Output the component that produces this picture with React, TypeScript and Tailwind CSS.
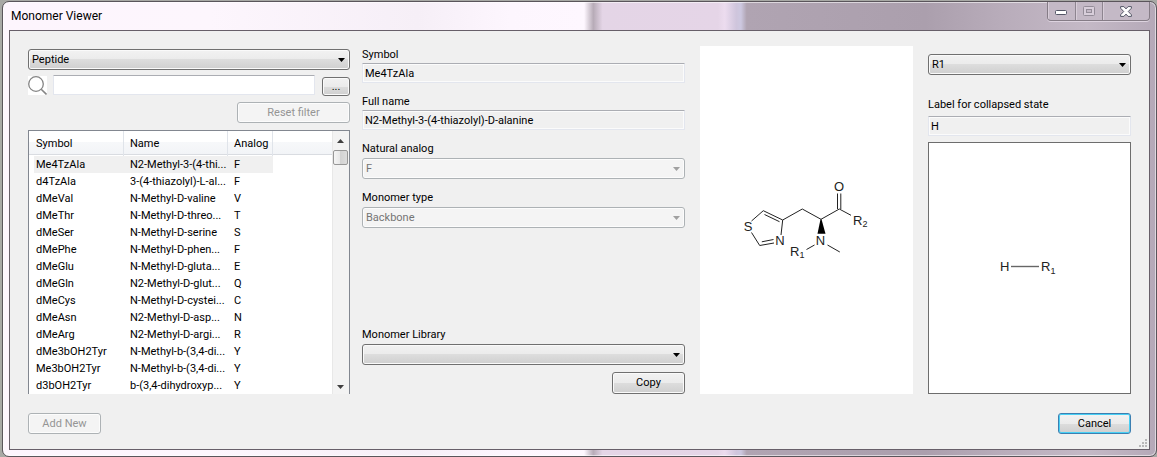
import React from "react";

const rows: [string, string, string][] = [
  ["Me4TzAla", "N2-Methyl-3-(4-thi...", "F"],
  ["d4TzAla", "3-(4-thiazolyl)-L-al...", "F"],
  ["dMeVal", "N-Methyl-D-valine", "V"],
  ["dMeThr", "N-Methyl-D-threo...", "T"],
  ["dMeSer", "N-Methyl-D-serine", "S"],
  ["dMePhe", "N-Methyl-D-phen...", "F"],
  ["dMeGlu", "N-Methyl-D-gluta...", "E"],
  ["dMeGln", "N2-Methyl-D-glut...", "Q"],
  ["dMeCys", "N-Methyl-D-cystei...", "C"],
  ["dMeAsn", "N2-Methyl-D-asp...", "N"],
  ["dMeArg", "N2-Methyl-D-argi...", "R"],
  ["dMe3bOH2Tyr", "N-Methyl-b-(3,4-di...", "Y"],
  ["Me3bOH2Tyr", "N-Methyl-b-(3,4-di...", "Y"],
  ["d3bOH2Tyr", "b-(3,4-dihydroxyp...", "Y"],
];

const raised =
  "bg-[linear-gradient(#f2f2f2,#ebebeb_50%,#dddddd_50%,#cfcfcf)] border-[#707070] text-black shadow-[inset_0_0_0_1px_#fafafa]";
const faded = "bg-[#f4f4f4] border-[#adb2b5] shadow-[inset_0_0_0_1px_#fcfcfc]";

function Button({
  children,
  className = "",
  disabled = false,
}: {
  children: React.ReactNode;
  className?: string;
  disabled?: boolean;
}) {
  return (
    <button
      type="button"
      disabled={disabled}
      className={`flex shrink-0 items-center justify-center rounded-[3px] border ${
        disabled ? `${faded} text-[#959595]` : raised
      } ${className}`}
    >
      {children}
    </button>
  );
}

function Select({
  id,
  value,
  disabled = false,
  label,
}: {
  id: string;
  value: string;
  disabled?: boolean;
  label?: string;
}) {
  return (
    <div className="relative">
      <select
        id={id}
        aria-label={label}
        disabled={disabled}
        defaultValue={value}
        className={`block h-[21px] w-full appearance-none rounded-[3px] border pr-5 pl-[3px] opacity-100 ${
          disabled ? `${faded} text-[#747474]` : raised
        }`}
      >
        <option value={value}>{value}</option>
      </select>
      <svg
        className={`pointer-events-none absolute top-[9px] right-[5px] ${
          disabled ? "fill-[#a0a0a0]" : "fill-black"
        }`}
        width="7"
        height="4"
        viewBox="0 0 7 4"
      >
        <path d="M0 0h7L3.5 4z" />
      </svg>
    </div>
  );
}

function ReadOnly({ id, value }: { id: string; value: string }) {
  return (
    <input
      id={id}
      readOnly
      value={value}
      className="block h-5 w-full rounded-[1px] border border-[#e3e6ee] border-t-[#abadb3] bg-[#f0f0f0] px-0.5 shadow-[inset_0_0_0_1px_#fbfbfb]"
    />
  );
}

function Label({ htmlFor, children }: { htmlFor: string; children: React.ReactNode }) {
  return (
    <label htmlFor={htmlFor} className="block h-4 leading-4">
      {children}
    </label>
  );
}

function WindowButtons() {
  return (
    <div className="flex h-[19px] overflow-hidden rounded-b-[4px] border border-t-0 border-[#857c86] bg-[#c4b9c6] shadow-[0_1px_0_#ddd3df]">
      <button type="button" aria-label="Minimize" className="flex w-7 items-center justify-center border-r border-[#8e8590] shadow-[inset_1px_0_0_#d8ced9]">
        <svg width="13" height="6" viewBox="0 0 13 6" className="mt-1">
          <rect x="0.5" y="0.5" width="11" height="4" rx="1" fill="#fff" stroke="#535666" />
        </svg>
      </button>
      <button type="button" aria-label="Maximize" disabled className="flex w-[27px] items-center justify-center border-r border-[#8e8590] shadow-[inset_1px_0_0_#d8ced9]">
        <svg width="12" height="10" viewBox="0 0 12 10">
          <rect x="0.5" y="0.5" width="11" height="9" rx="1" fill="#d8ceda" stroke="#948c98" />
          <rect x="3.5" y="3.5" width="5" height="3" fill="#c4b9c6" stroke="#948c98" />
        </svg>
      </button>
      <button type="button" aria-label="Close" className="flex w-[46px] items-center justify-center shadow-[inset_1px_0_0_#d8ced9]">
        <svg width="12" height="11" viewBox="0 0 12 11">
          <path
            d="M.6.6h3.3L6 2.9 8.1.6h3.3v1.6L8.3 5.5l3.1 3.3v1.6H8.1L6 8.1l-2.1 2.3H.6V8.8l3.1-3.3L.6 2.2z"
            fill="#fff"
            stroke="#535666"
          />
        </svg>
      </button>
    </div>
  );
}

function MonomerTable() {
  return (
    <div className="flex h-[264px] overflow-hidden border border-b-0 border-[#828790] bg-white">
      <div className="flex-1 overflow-hidden bg-[linear-gradient(#fff_11px,#f7f8fa_11px,#f2f4f7_23px,#d9dce1_23px,#d9dce1_24px,#fff_24px)] pl-[5px]">
        <table className="w-[239px] table-fixed border-separate border-spacing-0 text-left">
          <colgroup>
            <col className="w-[90px]" />
            <col className="w-[104px]" />
            <col className="w-[45px]" />
          </colgroup>
          <thead>
            <tr className="h-[25px]">
              <th className="border-r border-[#e0e4ea] p-0 pl-0.5 font-normal">Symbol</th>
              <th className="border-r border-[#e0e4ea] p-0 pl-1.5 font-normal">Name</th>
              <th className="border-r border-[#e0e4ea] p-0 pl-1.5 font-normal">Analog</th>
            </tr>
          </thead>
          <tbody>
            {rows.map(([symbol, name, analog], i) => (
              <tr key={symbol} className={i === 0 ? "h-[17px] bg-[#f0f0f0]" : "h-[17px]"}>
                <td className="p-0 pl-0.5 whitespace-nowrap">{symbol}</td>
                <td className="p-0 pl-1.5 whitespace-nowrap">{name}</td>
                <td className="p-0 pl-1.5">{analog}</td>
              </tr>
            ))}
          </tbody>
        </table>
      </div>
      <div className="flex w-[17px] flex-col items-center bg-[#f3f3f3] shadow-[inset_1px_0_0_#e8e8e8]">
        <svg width="7" height="4" viewBox="0 0 7 4" className="mt-2 fill-[#404040]">
          <path d="M0 4h7L3.5 0z" />
        </svg>
        <div className="mt-[7px] h-[15px] w-[15px] rounded-[2px] border border-[#979797] bg-[linear-gradient(90deg,#f5f5f5,#e6e6e6_50%,#d2d2d2_50%,#dcdcdc)]" />
        <svg width="7" height="4" viewBox="0 0 7 4" className="mt-auto mb-[5px] fill-[#404040]">
          <path d="M0 0h7L3.5 4z" />
        </svg>
      </div>
    </div>
  );
}

function MonomerStructure() {
  return (
    <svg
      width="213"
      height="348"
      viewBox="0 0 213 348"
      className="font-['Liberation_Sans',Arial,sans-serif] text-[13px]"
      role="img"
      aria-label="Monomer structure"
    >
      <g fill="none" stroke="#222" strokeWidth="1">
        <path d="M51.5 175 63.3 164.7 82.7 174 81 189" />
        <path d="M64.5 168.5 79.5 175.7" />
        <path d="M51.5 186.5 59.7 199.5 74 197" />
        <path d="M61.8 195.8 73.5 193.5" />
        <path d="M82.7 174 102.3 163 121 173.3 139.3 163 151 169.3" />
        <path d="M137.5 163V147.5M140.8 163V147.5" />
        <path d="M127.5 199 139.8 206M114.5 199 106.5 203.5" />
      </g>
      <path d="M120.5 173.3h1l4 14.4h-8z" fill="#000" />
      <g fill="#222" textAnchor="middle">
        <text x="48" y="185">S</text>
        <text x="80" y="199">N</text>
        <text x="120.5" y="199">N</text>
        <text x="139" y="145">O</text>
      </g>
      <g fill="#222">
        <text x="153" y="179">
          R<tspan dy="2" className="text-[9px]">2</tspan>
        </text>
        <text x="90" y="210">
          R<tspan dy="2" className="text-[9px]">1</tspan>
        </text>
      </g>
    </svg>
  );
}

function CapStructure() {
  return (
    <svg
      width="201"
      height="250"
      viewBox="0 0 201 250"
      className="font-['Liberation_Sans',Arial,sans-serif] text-[13px]"
      role="img"
      aria-label="R-group structure"
    >
      <text x="71" y="128" fill="#222">H</text>
      <path d="M82 123.5H110" stroke="#666" strokeWidth="1.4" />
      <text x="112" y="128" fill="#222">
        R<tspan dy="3" className="text-[9px]">1</tspan>
      </text>
    </svg>
  );
}

export default function App() {
  return (
    <div className="flex min-h-screen bg-[#a8a9a5] pt-px pl-0.5 font-[Roboto,'Liberation_Sans',sans-serif] text-[11px] leading-4 text-black">
      <div className="flex flex-1 flex-col rounded-[7px] border border-[#5a555b] bg-[linear-gradient(90deg,#fdf5fd_0%,#fdf6fd_18%,#f6eff7_36%,#fdf6fe_44%,#fef7ff_50.4%,#b7abb7_51.2%,#e4d5e6_52%,#e5d5e7_62%,#ecdcef_62.6%,#cfc5dc_63.6%,#cdc8e0_64%,#b0a4b2_64.5%,#ab9fad_80%,#b9adbb_87%,#c4b9c6_94%,#b5a9b8_100%)] px-1.5 pb-1.5 shadow-[inset_0_0_0_1px_#ffffff90]">
        <header className="flex h-7 items-start justify-between">
          <h1 className="pl-0.5 text-[12px] leading-7">Monomer Viewer</h1>
          <WindowButtons />
        </header>

        <main className="relative flex flex-1 flex-col border border-[#675f69] bg-[#f0f0f0] px-[18px] py-[15px]">
          <div className="grid grid-cols-[657fr_213fr_203fr] gap-[15px]">
            <div className="grid grid-cols-[322fr_323fr] gap-3">
              <section className="flex flex-col pt-[3px]">
                <Select id="polymer" label="Polymer type" value="Peptide" />
                <div className="mt-[5px] flex h-[21px] items-start">
                  <svg width="19" height="19" viewBox="0 0 19 19" className="mt-px shrink-0 bg-white" fill="none" stroke="#858585">
                    <circle cx="8" cy="8" r="7.3" strokeWidth="1.3" />
                    <path d="M13.2 13.2 18.5 18.5" strokeWidth="1.6" />
                  </svg>
                  <input
                    aria-label="Filter"
                    className="ml-1.5 h-5 min-w-0 flex-1 rounded-[1px] border border-[#e3e6ee] border-t-[#abadb3] bg-white px-1"
                  />
                  <Button className="ml-[7px] h-[19px] w-7 self-end">...</Button>
                </div>
                <Button disabled className="mt-1.5 h-[21px] w-[113px] self-end">
                  Reset filter
                </Button>
                <div className="mt-[7px]">
                  <MonomerTable />
                </div>
              </section>

              <section className="flex flex-col gap-[11px] pt-px">
                <div>
                  <Label htmlFor="symbol">Symbol</Label>
                  <ReadOnly id="symbol" value="Me4TzAla" />
                </div>
                <div>
                  <Label htmlFor="fullname">Full name</Label>
                  <ReadOnly id="fullname" value="N2-Methyl-3-(4-thiazolyl)-D-alanine" />
                </div>
                <div className="flex flex-col gap-px">
                  <Label htmlFor="analog">Natural analog</Label>
                  <Select id="analog" value="F" disabled />
                </div>
                <div className="flex flex-col gap-px">
                  <Label htmlFor="type">Monomer type</Label>
                  <Select id="type" value="Backbone" disabled />
                </div>
                <div className="mt-auto flex flex-col gap-px">
                  <Label htmlFor="library">Monomer Library</Label>
                  <Select id="library" value="" />
                  <Button className="mt-1.5 h-[22px] w-[73px] self-end">Copy</Button>
                </div>
              </section>
            </div>

            <section className="flex items-center justify-center bg-white">
              <MonomerStructure />
            </section>

            <section className="flex flex-col pt-2">
              <Select id="rgroup" label="R-group" value="R1" />
              <div className="mt-[22px] flex flex-col gap-[3px]">
                <Label htmlFor="collapsed">Label for collapsed state</Label>
                <ReadOnly id="collapsed" value="H" />
              </div>
              <div className="mt-1.5 flex flex-1 items-center justify-center border border-[#6d6d6d] bg-white">
                <CapStructure />
              </div>
            </section>
          </div>

          <footer className="mt-[19px] flex justify-between">
            <Button disabled className="h-[21px] w-[73px]">
              Add New
            </Button>
            <button
              type="button"
              className="h-[21px] w-[73px] rounded-[3px] border border-[#3c7fb1] bg-[linear-gradient(#f2f2f2,#ebebeb_50%,#dddddd_50%,#cfcfcf)] shadow-[inset_0_0_0_1px_#48d0f5]"
            >
              <span className="block leading-4">Cancel</span>
            </button>
          </footer>

          <svg width="8" height="8" viewBox="0 0 8 8" className="absolute right-0.5 bottom-0.5 fill-[#b8b8b8]">
            <path d="M6 0h2v2H6zM6 3h2v2H6zM3 3h2v2H3zM6 6h2v2H6zM3 6h2v2H3zM0 6h2v2H0z" />
          </svg>
        </main>
      </div>
    </div>
  );
}
